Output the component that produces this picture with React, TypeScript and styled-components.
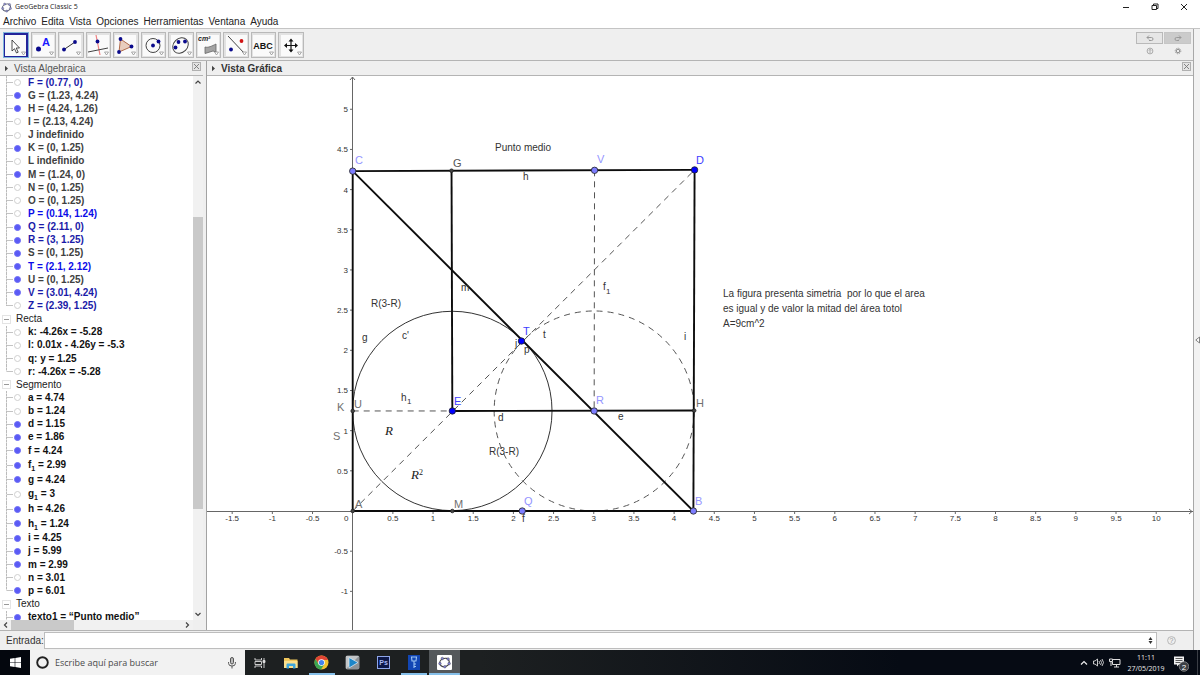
import React from 'react';
import styled, { createGlobalStyle, css } from 'styled-components';

const GlobalStyle = createGlobalStyle`
  * { box-sizing: border-box; }
  body { margin: 0; background: #f0f0f0; }
  button, input { font: inherit; color: inherit; border: 0; padding: 0; margin: 0; border-radius: 0; outline: 0; }
  ul { list-style: none; margin: 0; padding: 0; }
  svg { display: block; }
`;

const sans = '"Liberation Sans", Arial, sans-serif';
const ui = '"Open Sans", "Noto Sans", sans-serif';

const Page = styled.div`
  min-height: 100vh;
  display: flex;
  flex-direction: column;
  font: 10px/14px ${sans};
  color: #222;
`;

const TitleBar = styled.header`
  height: 14px;
  background: #fff;
  display: flex;
  align-items: center;
  padding: 0 11px 0 1px;
  gap: 3px;
  font: 7px/14px ${ui};
  color: #222;
`;
const Title = styled.span`flex: 1;`;
const WindowButtons = styled.div`display: flex; gap: 19px;`;
const WindowButton = styled.button`
  width: 10px;
  height: 12px;
  background: none;
  display: grid;
  place-items: center;
`;

const MenuBar = styled.nav`
  height: 14px;
  background: #fff;
  display: flex;
  align-items: flex-end;
  gap: 5px;
  padding: 0 3px;
`;
const MenuLink = styled.a`
  color: #222;
  text-decoration: none;
  line-height: 12px;
`;

const Workspace = styled.div`
  flex: 1;
  display: flex;
  background: #efefef;
  border-top: 1px solid #c4c4c4;
`;
const MainColumn = styled.main`
  flex: 1;
  min-width: 0;
  display: flex;
  flex-direction: column;
  border-right: 1px solid #a8a8a8;
`;
const SideStrip = styled.button`
  width: 6px;
  background: #f2f2f2;
  display: grid;
  place-items: center;
`;

const Toolbar = styled.div`
  height: 32px;
  border-bottom: 1px solid #b4b4b4;
  display: flex;
  justify-content: space-between;
  padding: 3px 2px 2px 3px;
`;
const ToolGroup = styled.div`
  width: 301px;
  height: 26px;
  display: grid;
  grid-template-columns: repeat(11, 1fr);
  gap: 2px;
`;
const ToolButton = styled.button<{ $active?: boolean }>`
  background: #e2e2e2;
  border: 1px solid #b9b9b9;
  display: grid;
  place-items: center;
  ${p => p.$active && css`
    background: #24249a;
    border-color: #7fb4dc;
  `}
`;
const CornerTools = styled.div`
  display: grid;
  grid-template-columns: 27px 27px;
  grid-template-rows: 12px 13px;
  column-gap: 1px;
`;
const CornerButton = styled.button<{ $tone?: 'light' | 'dark' }>`
  background: ${p => (p.$tone === 'light' ? '#e6e6e6' : p.$tone === 'dark' ? '#cbcbcb' : 'none')};
  border: ${p => (p.$tone === 'light' ? '1px solid #b9b9b9' : p.$tone === 'dark' ? '1px solid #c6c6c6' : '0')};
  display: grid;
  place-items: center;
`;

const Views = styled.div`
  flex: 1;
  display: flex;
  min-height: 0;
`;
const AlgebraPanel = styled.section`
  width: 207px;
  display: flex;
  flex-direction: column;
  border-right: 1px solid #a2a2a2;
  padding-right: 3px;
`;
const GraphicsPanel = styled.section`
  flex: 1;
  min-width: 0;
  display: flex;
  flex-direction: column;
`;
const ViewHeader = styled.div`
  height: 15px;
  flex: none;
  display: flex;
  align-items: center;
  gap: 5px;
  padding: 0 2px 0 4px;
  border-bottom: 1px solid #b4b4b4;
  color: #555;
`;
const ViewTitle = styled.h2<{ $bold?: boolean }>`
  margin: 0;
  padding-top: 2px;
  flex: 1;
  font: ${p => (p.$bold ? 'bold' : 'normal')} 10px/12px ${sans};
  color: ${p => (p.$bold ? '#333' : '#555')};
`;
const CloseButton = styled.button`
  width: 9px;
  height: 9px;
  align-self: flex-start;
  margin-top: 1px;
  background: #e4e4e4;
  border: 1px solid #b0b0b0;
  display: grid;
  place-items: center;
`;

const ListArea = styled.div`
  flex: 1;
  min-height: 0;
  display: flex;
  background: #fff;
`;
const TreeClip = styled.div`
  flex: 1;
  overflow: hidden;
  contain: size;
`;
const Tree = styled.ul`
  height: calc(100% + 4px);
  display: flex;
  flex-direction: column;
`;
const GroupRow = styled.li`
  flex: 1 1 13px;
  min-height: 0;
  display: flex;
  align-items: center;
  gap: 5px;
  padding-left: 2px;
  line-height: 14px;
`;
const Expander = styled.button`
  width: 9px;
  height: 9px;
  background: #fff;
  border: 1px solid #e4e4e4;
  display: grid;
  place-items: center;
  &::after { content: ''; width: 5px; height: 1px; background: #999; }
`;
const ItemRow = styled.li<{ $tall?: boolean; $last?: boolean; $color: string }>`
  flex: 1 1 ${p => (p.$tall ? '16px' : '13px')};
  min-height: 0;
  display: flex;
  align-items: center;
  gap: 7px;
  margin-left: 6px;
  background:
    linear-gradient(#c4c4c4, #c4c4c4) 1px 50% / 6px 1px no-repeat,
    repeating-linear-gradient(#bbb 0 2px, #ddd 2px 3px) 0 0 / 1px ${p => (p.$last ? '50%' : '100%')} no-repeat;
  padding-left: 8px;
  font-weight: bold;
  line-height: 12px;
  white-space: nowrap;
  color: ${p => p.$color};
`;
const Marble = styled.button<{ $on: boolean }>`
  width: 7px;
  height: 7px;
  flex: none;
  border-radius: 50%;
  background: ${p => (p.$on ? '#5a5af5' : '#fff')};
  border: 1px solid ${p => (p.$on ? '#6e6ef5' : '#cfcfcf')};
`;
const Index = styled.sub`
  font-size: 7px;
  line-height: 1px;
`;

const ScrollColumn = styled.div`
  width: 10px;
  background: #f1f1f1;
  display: grid;
  grid-template-rows: 12px 129fr 292fr 99fr 12px;
`;
const ScrollRow = styled.div`
  height: 10px;
  flex: none;
  margin-right: 10px;
  background: #f1f1f1;
  display: grid;
  grid-template-columns: 11px 63fr 108fr 12px;
`;
const ScrollThumb = styled.div`background: #c9c9c9;`;
const ScrollGap = styled.div``;
const ScrollArrow = styled.button`
  background: none;
  display: grid;
  place-items: center;
`;

const CanvasBox = styled.div`
  flex: 1;
  min-height: 0;
  background: #fff;
  contain: size;
  overflow: hidden;
`;

const InputBar = styled.form`
  height: 20px;
  flex: none;
  border-top: 1px solid #b4b4b4;
  display: flex;
  align-items: center;
  padding: 0 17px 0 6px;
`;
const InputLabel = styled.label`
  width: 38px;
  color: #333;
`;
const InputFrame = styled.div`
  flex: 1;
  height: 17px;
  background: #fff;
  border: 1px solid #bdbdbd;
  display: flex;
  align-items: center;
  padding-right: 3px;
`;
const InputField = styled.input`
  flex: 1;
  min-width: 0;
  background: none;
`;
const PlainButton = styled.button`
  background: none;
  display: grid;
  place-items: center;
`;
const HelpButton = styled(PlainButton)`margin-left: 10px;`;

const Taskbar = styled.footer`
  height: 25px;
  display: flex;
  align-items: stretch;
  background: linear-gradient(90deg, #1d2021 0%, #1d2021 40%, #060b14 75%);
  color: #e8e8e8;
  font: 9px/12px ${ui};
`;
const StartButton = styled.button`
  width: 30px;
  background: #04070e;
  display: grid;
  place-items: center;
`;
const SearchBox = styled.label`
  width: 215px;
  background: #f2f2f2;
  display: flex;
  align-items: center;
  gap: 6px;
  padding: 0 9px 0 6px;
`;
const SearchInput = styled.input`
  flex: 1;
  min-width: 0;
  background: none;
  font: 9px/12px ${ui};
  &::placeholder { color: #4a4a4a; opacity: 1; }
`;
const AppRow = styled.div`
  width: 215px;
  display: grid;
  grid-template-columns: repeat(7, 1fr);
`;
const AppButton = styled.button<{ $open?: boolean; $focused?: boolean }>`
  display: grid;
  place-items: center;
  background: ${p => (p.$focused ? '#54585b' : 'none')};
  ${p => (p.$open || p.$focused) && css`
    background-image: linear-gradient(#86c0ea, #86c0ea);
    background-size: ${p.$focused ? '100%' : '26px'} 2px;
    background-position: center bottom;
    background-repeat: no-repeat;
  `}
`;
const Tray = styled.div`
  margin-left: auto;
  display: flex;
  align-items: center;
  gap: 5px;
  border-right: 1px solid #3a3e45;
  margin-right: 2px;
  padding-right: 8px;
`;
const Clock = styled.time`
  font: 7px/11px ${ui};
  text-align: center;
  width: 40px;
`;
const Day = styled.span`display: block;`;

const BLUE = '#1a1aa8';
const BRIGHT = '#0b0be8';
const GRAY = '#404040';
const BLACK = '#111';

type Item = { name: string; index?: string; rest: string; on: boolean; color: string };
const item = (text: string, on: boolean, color: string, index?: string): Item => {
  const cut = index ? 1 : text.length;
  return { name: text.slice(0, cut), index, rest: text.slice(cut), on, color };
};

const groups: { title?: string; items: Item[] }[] = [
  {
    items: [
      item('F = (0.77, 0)', false, BLUE),
      item('G = (1.23, 4.24)', true, GRAY),
      item('H = (4.24, 1.26)', true, GRAY),
      item('I = (2.13, 4.24)', false, GRAY),
      item('J indefinido', false, GRAY),
      item('K = (0, 1.25)', true, GRAY),
      item('L indefinido', false, GRAY),
      item('M = (1.24, 0)', true, GRAY),
      item('N = (0, 1.25)', false, GRAY),
      item('O = (0, 1.25)', false, GRAY),
      item('P = (0.14, 1.24)', false, BRIGHT),
      item('Q = (2.11, 0)', true, BLUE),
      item('R = (3, 1.25)', true, BLUE),
      item('S = (0, 1.25)', true, GRAY),
      item('T = (2.1, 2.12)', true, BRIGHT),
      item('U = (0, 1.25)', true, GRAY),
      item('V = (3.01, 4.24)', true, BLUE),
      item('Z = (2.39, 1.25)', false, BLUE),
    ],
  },
  {
    title: 'Recta',
    items: [
      item('k: -4.26x = -5.28', false, BLACK),
      item('l: 0.01x - 4.26y = -5.3', false, BLACK),
      item('q: y = 1.25', false, BLACK),
      item('r: -4.26x = -5.28', false, BLACK),
    ],
  },
  {
    title: 'Segmento',
    items: [
      item('a = 4.74', false, BLACK),
      item('b = 1.24', false, BLACK),
      item('d = 1.15', true, BLACK),
      item('e = 1.86', true, BLACK),
      item('f = 4.24', true, BLACK),
      item('f = 2.99', true, BLACK, '1'),
      item('g = 4.24', true, BLACK),
      item('g = 3', false, BLACK, '1'),
      item('h = 4.26', true, BLACK),
      item('h = 1.24', true, BLACK, '1'),
      item('i = 4.25', true, BLACK),
      item('j = 5.99', true, BLACK),
      item('m = 2.99', true, BLACK),
      item('n = 3.01', false, BLACK),
      item('p = 6.01', true, BLACK),
    ],
  },
  { title: 'Texto', items: [item('texto1 = “Punto medio”', true, BLACK)] },
];

/* Graphics view: world coordinates to canvas pixels */
const UNIT = 80.35;
const X = (x: number) => 145.7 + x * UNIT;
const Y = (y: number) => 435 - y * UNIT;

type Pt = [number, number];
const P: Record<string, Pt> = {
  A: [0, 0], B: [4.24, 0], C: [0, 4.23], D: [4.255, 4.245], E: [1.24, 1.245], G: [1.23, 4.235],
  H: [4.25, 1.25], K: [0, 1.245], M: [1.24, 0], Q: [2.11, 0], R: [3.005, 1.245], T: [2.1, 2.115], V: [3.01, 4.24],
};
const solid: [string, string][] = [
  ['A', 'C'], ['C', 'D'], ['D', 'B'], ['A', 'B'], ['G', 'E'], ['E', 'H'], ['C', 'B'],
];
const dashed: [string, string][] = [['A', 'D'], ['K', 'E'], ['V', 'R']];
const dots: [string, string, number][] = [
  ['A', '#444', 1.8], ['G', '#444', 1.8], ['H', '#444', 1.8], ['K', '#444', 1.8], ['M', '#444', 1.8],
  ['C', '#7d7dff', 3.2], ['V', '#7d7dff', 3.2], ['R', '#7d7dff', 3.2], ['Q', '#7d7dff', 3.2], ['B', '#7d7dff', 3.2],
  ['D', '#0000ff', 3.2], ['E', '#0000ff', 3.2], ['T', '#0000ff', 3.2],
];
const LIGHT = '#9494ff';
const VIVID = '#4040ff';
const MUTED = '#707070';
const INK = '#333';
type Label = [string, number, number, string];
const pointLabels: Label[] = [
  ['C', 148, 88, LIGHT], ['G', 246, 91, '#555'], ['V', 390, 87, LIGHT], ['D', 489, 88, VIVID],
  ['H', 489, 331, MUTED], ['B', 488, 429, LIGHT], ['Q', 317, 429, LIGHT], ['M', 247, 432, MUTED],
  ['A', 148, 432, MUTED], ['E', 247, 329, VIVID], ['R', 389, 328, LIGHT], ['T', 316, 259, VIVID],
  ['K', 130, 335, MUTED], ['U', 147, 332, MUTED], ['S', 126, 364, MUTED],
];
const textLabels: Label[] = [
  ['g', 155, 265, INK], ["c'", 195, 263, INK], ['m', 254, 215, INK], ['h', 316, 104, INK],
  ['f', 396, 214, INK], ['i', 477, 264, INK], ['j', 308, 271, INK], ['p', 317, 277, INK],
  ['t', 336, 262, INK], ['d', 291, 345, INK], ['e', 411, 344, INK], ['h', 194, 325, INK],
  ['f', 315, 446, INK],
  ['R(3-R)', 164, 231, INK], ['R(3-R)', 282, 379, INK], ['Punto medio', 288, 75, INK],
  ['La figura presenta simetria \u00a0por lo que el area', 516, 221, INK],
  ['es igual y de valor la mitad del área totol', 516, 236, INK],
  ['A=9cm^2', 516, 251, INK],
];
const range = (from: number, to: number) =>
  Array.from({ length: Math.round((to - from) * 2) + 1 }, (_, i) => from + i / 2).filter(v => v !== 0);

const Construction = () => (
  <svg width="100%" height="100%" role="img" aria-label="Vista Gráfica" fontFamily="Liberation Sans, Arial, sans-serif">
    <g stroke="#666" strokeWidth="1" fill="none">
      <line x1="0" x2="100%" y1="435.5" y2="435.5" />
      <line x1="145.5" x2="145.5" y1="1" y2="100%" />
      <path d="M143 4l2.500-3 2.500 3" />
      <svg x="100%" overflow="visible"><path d="M-4 433l3 2.500-3 2.500" /></svg>
      {range(-1.5, 10).map(v => <line key={v} x1={X(v)} x2={X(v)} y1="435" y2="438" />)}
      {range(-1, 5).map(v => <line key={v} x1="143" x2="146" y1={Y(v)} y2={Y(v)} />)}
    </g>
    <g fontSize="8" fill="#333">
      {range(-1.5, 10).map(v => <text key={v} x={X(v)} y="445" textAnchor="middle">{v}</text>)}
      {range(-1, 5).map(v => <text key={v} x="141" y={Y(v) + 3} textAnchor="end">{v}</text>)}
      <text x="137" y="445">0</text>
    </g>
    <g fill="none" stroke="#333">
      <circle cx={X(1.24)} cy={Y(1.245)} r="99.700" />
      <circle cx={X(3.005)} cy={Y(1.245)} r="100" strokeDasharray="6 5" stroke="#555" />
      {dashed.map(([a, b]) => (
        <line key={a + b} x1={X(P[a][0])} y1={Y(P[a][1])} x2={X(P[b][0])} y2={Y(P[b][1])} stroke="#555" strokeDasharray="6 5" />
      ))}
    </g>
    <g stroke="#0c0c0c" strokeWidth="1.9">
      {solid.map(([a, b]) => (
        <line key={a + b} x1={X(P[a][0])} y1={Y(P[a][1])} x2={X(P[b][0])} y2={Y(P[b][1])} />
      ))}
    </g>
    {dots.map(([n, fill, r]) => (
      <circle key={n} cx={X(P[n][0])} cy={Y(P[n][1])} r={r} fill={fill} stroke="#222" strokeWidth="0.8" />
    ))}
    <g fontSize="11">
      {pointLabels.map(([t, x, y, c]) => <text key={t} x={x} y={y} fill={c}>{t}</text>)}
    </g>
    <g fontSize="10">
      {textLabels.map(([t, x, y, c]) => <text key={t + x} x={x} y={y} fill={c}>{t}</text>)}
    </g>
    <g fontSize="8" fill={INK}>
      <text x="399" y="218">1</text>
      <text x="200" y="328">1</text>
    </g>
    <g fontFamily="Liberation Serif, Times New Roman, serif" fontSize="13" fill="#222">
      <text x="178" y="359" fontStyle="italic">R</text>
      <text x="204" y="403" fontStyle="italic">R</text>
      <text x="212" y="399" fontSize="8">2</text>
    </g>
  </svg>
);

const dot = '#0a0a8c';
const toolDrawings: { name: string; art: React.ReactNode }[] = [
  { name: 'Elige y mueve', art: <path d="M7 5v11l2.500-2.300 2 4.300 1.700-.8-2-4.200h3.300z" fill="#fff" stroke="#222" strokeWidth=".8" /> },
  { name: 'Punto', art: <><circle cx="5.500" cy="14" r="2.500" fill={dot} /><text x="9" y="11" fontSize="11" fontWeight="bold" fill="#1a1aff">A</text></> },
  { name: 'Recta', art: <><path d="M4 14.500L15 7" stroke="#333" /><circle cx="4" cy="14.500" r="1.900" fill={dot} /><circle cx="15" cy="7" r="1.900" fill={dot} /></> },
  { name: 'Perpendicular', art: <><path d="M8 0l4 20" stroke="#f08080" strokeWidth="1.200" /><path d="M0 17l20-4" stroke="#444" /><circle cx="9.500" cy="6.500" r="1.900" fill={dot} /></> },
  { name: 'Polígono', art: <><path d="M5.500 4l11 7.500L4 17z" fill="#e8cdbd" stroke="#b06a4a" /><circle cx="5.500" cy="4" r="1.900" fill={dot} /><circle cx="16.500" cy="11.500" r="1.900" fill={dot} /><circle cx="4" cy="17" r="1.900" fill={dot} /></> },
  { name: 'Circunferencia', art: <><circle cx="10" cy="10.500" r="7" fill="none" stroke="#444" /><circle cx="10" cy="10.500" r="1.900" fill={dot} /><circle cx="15.500" cy="6.500" r="1.900" fill={dot} /></> },
  { name: 'Cónica', art: <><ellipse cx="9.500" cy="10.500" rx="8.500" ry="7" transform="rotate(-45 9.500 10.500)" fill="none" stroke="#444" /><circle cx="7.500" cy="7" r="1.900" fill={dot} /><circle cx="4.500" cy="12.500" r="1.900" fill={dot} /><circle cx="14" cy="6.500" r="1.900" fill={dot} /></> },
  { name: 'Área', art: <><path d="M7 12c3 1 7-1 11-3v8l-3-1-8 2.500z" fill="#a3a3a3" stroke="#666" strokeWidth=".8" /><text x="0" y="6" fontSize="7" fontStyle="italic" fontWeight="bold" fill="#222">cm²</text></> },
  { name: 'Simetría', art: <><path d="M2 1l17 18" stroke="#444" /><circle cx="5" cy="14.500" r="1.900" fill={dot} /><circle cx="15.500" cy="6" r="1.900" fill="#d01414" /></> },
  { name: 'Texto', art: <text x="10" y="14" fontSize="9" fontWeight="bold" textAnchor="middle" fill="#111">ABC</text> },
  { name: 'Desplaza', art: <><path d="M10 5v11M4.500 10.500h11" stroke="#111" strokeWidth="1.200" /><path d="M10 3.500l2.500 3h-5zM10 17.500l2.500-3h-5zM3 10.500l3-2.500v5zM17 10.500l-3-2.500v5z" fill="#111" /></> },
];

const Ring = ({ size, color, accent }: { size: number; color: string; accent: string }) => (
  <svg width={size} height={size} viewBox="0 0 12 12">
    <ellipse cx="6" cy="6" rx="4.500" ry="3.800" transform="rotate(-25 6 6)" fill="none" stroke={color} strokeWidth="1.100" />
    {[[4, 2.300], [9.300, 2.800], [10.300, 7], [6.300, 9.900], [1.800, 7]].map(([x, y]) => (
      <circle key={x} cx={x} cy={y} r="1.200" fill={accent} stroke={color} strokeWidth=".4" />
    ))}
  </svg>
);

const Chevron = ({ d, color = '#444' }: { d: string; color?: string }) => (
  <svg width="8" height="8" viewBox="0 0 8 8"><path d={d} fill="none" stroke={color} strokeWidth="1.200" /></svg>
);
const Cross = () => (
  <svg width="7" height="7" viewBox="0 0 7 7"><path d="M1 1l5 5M6 1L1 6" stroke="#777" strokeWidth=".9" /></svg>
);
const Marker = () => (
  <svg width="5" height="7" viewBox="0 0 5 7"><path d="M1 .8l3 2.700-3 2.700z" fill="#444" /></svg>
);
const HelpGlyph = () => (
  <svg width="9" height="9" viewBox="0 0 9 9"><circle cx="4.500" cy="4.500" r="3.900" fill="none" stroke="#aaa" strokeWidth=".8" /><text x="4.500" y="7" fontSize="7" textAnchor="middle" fill="#999" fontFamily="Liberation Sans">?</text></svg>
);

export default function App() {
  return (
    <Page>
      <GlobalStyle />
      <TitleBar>
        <Ring size={11} color="#555a70" accent="#8f8fd0" />
        <Title>GeoGebra Classic 5</Title>
        <WindowButtons>
          <WindowButton aria-label="Minimizar"><svg width="8" height="8"><path d="M1 4.500h6" stroke="#222" /></svg></WindowButton>
          <WindowButton aria-label="Restaurar"><svg width="8" height="8" fill="none" stroke="#222"><path d="M1 2.500h4.500v4H1zM2.500 2V1h4.500v4.500H6" /></svg></WindowButton>
          <WindowButton aria-label="Cerrar"><svg width="8" height="8"><path d="M1 1l6 6M7 1L1 7" stroke="#222" /></svg></WindowButton>
        </WindowButtons>
      </TitleBar>
      <MenuBar>
        {['Archivo', 'Edita', 'Vista', 'Opciones', 'Herramientas', 'Ventana', 'Ayuda'].map(m => (
          <MenuLink key={m} href="#">{m}</MenuLink>
        ))}
      </MenuBar>

      <Workspace>
        <MainColumn>
          <Toolbar>
            <ToolGroup>
              {toolDrawings.map(({ name, art }, i) => (
                <ToolButton key={name} aria-label={name} $active={i === 0}>
                  <svg width="21" height="21" viewBox="0 0 21 21" fontFamily="Liberation Sans">
                    <rect width="21" height="21" fill="#fafafa" />
                    {art}
                    <path d="M16.500 17h4l-2 3z" fill="#fff" stroke="#888" strokeWidth=".7" />
                  </svg>
                </ToolButton>
              ))}
            </ToolGroup>
            <CornerTools>
              <CornerButton $tone="light" aria-label="Deshace">
                <svg width="8" height="7" fill="none" stroke="#999"><path d="M3 .5L1 2.500l2 2M1 2.500h4.500q1.500 0 1.500 1.500T5.500 5.500H3" /></svg>
              </CornerButton>
              <CornerButton $tone="dark" aria-label="Rehace">
                <svg width="8" height="7" fill="none" stroke="#999"><path d="M5 .5l2 2-2 2M7 2.500H2.500Q1 2.500 1 4t1.500 1.500H5" /></svg>
              </CornerButton>
              <CornerButton aria-label="Ayuda"><svg width="8" height="8"><circle cx="4" cy="4" r="2.900" fill="none" stroke="#aaa" /><path d="M4 2.500v3.500M2.800 3.500L4 2.300l1.200 1.200" stroke="#999" strokeWidth=".8" fill="none" /></svg></CornerButton>
              <CornerButton aria-label="Preferencias"><svg width="8" height="8"><circle cx="4" cy="4" r="2.800" fill="none" stroke="#999" strokeWidth="1" strokeDasharray="1.200 1" /><circle cx="4" cy="4" r="1.800" fill="none" stroke="#888" /></svg></CornerButton>
            </CornerTools>
          </Toolbar>

          <Views>
            <AlgebraPanel>
              <ViewHeader>
                <Marker />
                <ViewTitle>Vista Algebraica</ViewTitle>
                <CloseButton aria-label="Cerrar Vista Algebraica"><Cross /></CloseButton>
              </ViewHeader>
              <ListArea>
                <TreeClip>
                  <Tree>
                    {groups.map((g, gi) => (
                      <React.Fragment key={gi}>
                        {g.title && <GroupRow><Expander aria-label={'Contraer ' + g.title} />{g.title}</GroupRow>}
                        {g.items.map((it, i) => (
                          <ItemRow
                            key={i}
                            $color={it.color}
                            $tall={!!it.index}
                            $last={i === g.items.length - 1 && gi < groups.length - 1}
                          >
                            <Marble $on={it.on} aria-label={'Mostrar ' + it.name} />
                            <span>{it.name}{it.index && <Index>{it.index}</Index>}{it.rest}</span>
                          </ItemRow>
                        ))}
                      </React.Fragment>
                    ))}
                  </Tree>
                </TreeClip>
                <ScrollColumn>
                  <ScrollArrow aria-label="Subir"><Chevron d="M1.500 5.500L4 3l2.500 2.500" /></ScrollArrow>
                  <ScrollGap />
                  <ScrollThumb />
                  <ScrollGap />
                  <ScrollArrow aria-label="Bajar"><Chevron d="M1.500 3L4 5.500 6.500 3" /></ScrollArrow>
                </ScrollColumn>
              </ListArea>
              <ScrollRow>
                <ScrollArrow aria-label="Izquierda"><Chevron d="M5 1.500L2.500 4 5 6.500" /></ScrollArrow>
                <ScrollThumb />
                <ScrollGap />
                <ScrollArrow aria-label="Derecha"><Chevron d="M3 1.500L5.500 4 3 6.500" /></ScrollArrow>
              </ScrollRow>
            </AlgebraPanel>

            <GraphicsPanel>
              <ViewHeader>
                <Marker />
                <ViewTitle $bold>Vista Gráfica</ViewTitle>
                <CloseButton aria-label="Cerrar Vista Gráfica"><Cross /></CloseButton>
              </ViewHeader>
              <CanvasBox><Construction /></CanvasBox>
            </GraphicsPanel>
          </Views>

          <InputBar onSubmit={e => e.preventDefault()}>
            <InputLabel htmlFor="entrada">Entrada:</InputLabel>
            <InputFrame>
              <InputField id="entrada" />
              <PlainButton type="button" aria-label="Historial">
                <svg width="5" height="9"><path d="M.5 4L2.500 1l2 3zM.5 5l2 3 2-3z" fill="#333" /></svg>
              </PlainButton>
            </InputFrame>
            <HelpButton type="button" aria-label="Ayuda de entrada"><HelpGlyph /></HelpButton>
          </InputBar>
        </MainColumn>
        <SideStrip aria-label="Abrir apariencias"><svg width="5" height="8"><path d="M4.500 1v6L.8 4z" fill="#fff" stroke="#666" strokeWidth=".8" /></svg></SideStrip>
      </Workspace>

      <Taskbar>
        <StartButton aria-label="Inicio">
          <svg width="11" height="11" viewBox="0 0 11 11"><path d="M0 1.700l4.700-.7v4.200H0zM5.300.9L11 0v5.200H5.300zM0 5.800h4.700V10L0 9.300zM5.300 5.800H11V11l-5.700-.9z" fill="#fff" /></svg>
        </StartButton>
        <SearchBox>
          <svg width="13" height="13"><circle cx="6.500" cy="6.500" r="5.300" fill="none" stroke="#222" strokeWidth="1.900" /></svg>
          <SearchInput aria-label="Buscar" placeholder="Escribe aquí para buscar" />
          <svg width="8" height="12" fill="none" stroke="#555"><rect x="2.500" y=".5" width="3" height="6.500" rx="1.500" fill="#bbb" /><path d="M.6 5v1.500Q.6 9 4 9t3.400-2.500V5M4 9v2.500" /></svg>
        </SearchBox>
        <AppRow>
          <AppButton aria-label="Vista de tareas">
            <svg width="12" height="12" fill="none" stroke="#ddd" strokeWidth=".9"><path d="M1 1v2h6.500V1M1 11V9h6.500v2M1 4.500h6.500v3H1zM10 1v10" /><path d="M9 3.500h2v2H9z" fill="#ddd" /></svg>
          </AppButton>
          <AppButton aria-label="Explorador">
            <svg width="14" height="12"><path d="M0 1h5l1 1.500h7.500V11H0z" fill="#f0c75c" /><path d="M0 4h13.500v7H0z" fill="#fbe08c" /><path d="M2.500 11.500V7.500q0-1 1-1h7q1 0 1 1v4H9V9H5v2.500z" fill="#3ea6dc" /></svg>
          </AppButton>
          <AppButton $open aria-label="Chrome">
            <svg width="15" height="15" viewBox="0 0 15 15">
              <circle cx="7.500" cy="7.500" r="7" fill="#f2c230" />
              <path d="M1.440 4A7 7 0 0 1 13.560 4L14 5H7.500L4.700 9z" fill="#e04434" />
              <path d="M1.440 4A7 7 0 0 0 7 14.500L10.500 9 7.500 10.500 4.500 9z" fill="#3aa554" />
              <circle cx="7.500" cy="7.500" r="3.300" fill="#fff" /><circle cx="7.500" cy="7.500" r="2.600" fill="#4384f0" />
            </svg>
          </AppButton>
          <AppButton aria-label="Reproductor">
            <svg width="15" height="15"><rect x=".5" y=".5" width="14" height="14" rx="2" fill="#8d9296" /><path d="M1 1h13L1 14z" fill="#c3c6c8" /><path d="M4 2.500l9 5-9 5.500z" fill="#1c86c8" stroke="#e4f2fa" strokeWidth=".7" /></svg>
          </AppButton>
          <AppButton aria-label="Photoshop">
            <svg width="13" height="13"><rect x=".5" y=".5" width="12" height="12" fill="#0c1747" stroke="#8ea6ea" /><text x="6.500" y="9" fontSize="7" fontWeight="bold" fill="#a6b8f5" textAnchor="middle" fontFamily="Liberation Sans">Ps</text></svg>
          </AppButton>
          <AppButton $open aria-label="Llave">
            <svg width="12" height="15"><rect width="12" height="15" fill="#1246b4" /><path d="M3.500 2h5L8 6H4zM6 6v7M6 9h2M6 11.500h2" fill="none" stroke="#9cc4f2" strokeWidth="1.100" /></svg>
          </AppButton>
          <AppButton $focused aria-label="GeoGebra">
            <svg width="15" height="15"><rect width="15" height="15" rx="1" fill="#fff" /><g transform="translate(1 1)"><Ring size={13} color="#444" accent="#8080d8" /></g></svg>
          </AppButton>
        </AppRow>
        <Tray>
          <PlainButton aria-label="Iconos ocultos"><Chevron d="M1 5.500L4 2.500l3 3" color="#eee" /></PlainButton>
          <PlainButton aria-label="Volumen"><svg width="11" height="9" fill="none" stroke="#ddd" strokeWidth=".9"><path d="M.5 3h1.500L4.500 1v7L2 6H.5zM6 3q1 1.500 0 3M7.500 2q2 2.500 0 5M9 1q3 3.500 0 7" /></svg></PlainButton>
          <PlainButton aria-label="Red"><svg width="12" height="10" fill="none" stroke="#ddd"><path d="M4 1.500h7v5H3.500V4M5 9h5M7.500 6.500V9M.5 1h3v2.500h-3zM2 3.500V8" /></svg></PlainButton>
          <Clock dateTime="2019-05-27T11:11">11:11<Day>27/05/2019</Day></Clock>
          <PlainButton aria-label="Notificaciones">
            <svg width="18" height="18"><path d="M3 2.500h10v8H8l-2 2v-2H3z" fill="#f2f2f2" /><path d="M4.500 4.500h7M4.500 6.500h7M4.500 8.500h5" stroke="#333" strokeWidth=".8" /><circle cx="13" cy="12.500" r="4.800" fill="#3c3f44" stroke="#999" strokeWidth=".7" /><text x="13" y="15.500" fontSize="8" fill="#fff" textAnchor="middle" fontFamily="Liberation Sans">2</text></svg>
          </PlainButton>
        </Tray>
      </Taskbar>
    </Page>
  );
}
